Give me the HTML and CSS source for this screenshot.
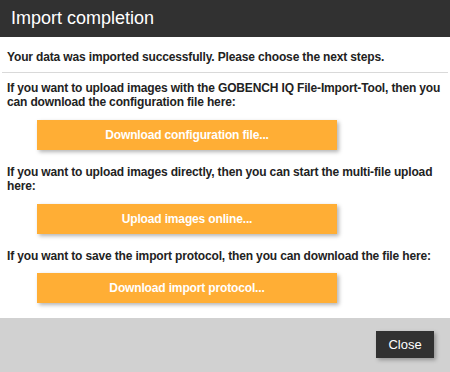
FILE: index.html
```html
<!DOCTYPE html>
<html>
<head>
<meta charset="utf-8">
<link rel="stylesheet" href="styles.css">
</head>
<body>
<div class="dialog">
  <div class="header">Import completion</div>
  <div class="body">
    <p class="intro">Your data was imported successfully. Please choose the next steps.</p>
    <div class="divider"></div>
    <div class="step">
      <p class="text">If you want to upload images with the GOBENCH IQ File-Import-Tool, then you can download the configuration file here:</p>
      <button class="btn">Download configuration file...</button>
    </div>
    <div class="step">
      <p class="text">If you want to upload images directly, then you can start the multi-file upload here:</p>
      <button class="btn">Upload images online...</button>
    </div>
    <div class="step">
      <p class="text">If you want to save the import protocol, then you can download the file here:</p>
      <button class="btn btn-last">Download import protocol...</button>
    </div>
  </div>
  <div class="footer">
    <button class="close">Close</button>
  </div>
</div>
</body>
</html>
```
FILE: styles.css
```css
html, body {
  margin: 0;
  padding: 0;
  background: #ffffff;
}
.dialog {
  width: 450px;
  height: 372px;
  display: flex;
  flex-direction: column;
  font-family: "Liberation Sans", Arial, sans-serif;
  color: #222;
}
.header {
  height: 37px;
  background: #313131;
  color: #ffffff;
  font-size: 18px;
  line-height: 37px;
  padding-left: 11px;
  flex: none;
}
.body {
  flex: 1;
  padding: 0 2px;
}
.intro {
  margin: 13px 0 0 5px;
  font-size: 12px;
  font-weight: bold;
  line-height: 14px;
  letter-spacing: -0.15px;
}
.divider {
  height: 1px;
  background: #d9d9d9;
  margin: 8px 0 0;
}
.step {
  display: flex;
  flex-direction: column;
  align-items: flex-start;
}
.text {
  margin: 8px 0 0 5px;
  font-size: 12px;
  font-weight: bold;
  line-height: 14px;
  letter-spacing: -0.15px;
}
.btn {
  margin: 11px 0 0 35px;
  width: 300px;
  height: 30px;
  border: none;
  background: #ffae35;
  color: #ffffff;
  font-family: "Liberation Sans", Arial, sans-serif;
  font-size: 12px;
  font-weight: bold;
  letter-spacing: -0.15px;
  box-shadow: 2px 2px 4px rgba(0, 0, 0, 0.3);
  padding: 0;
}
.btn-last {
  margin-top: 10px;
}
.step + .step .text {
  margin-top: 15px;
}
.footer {
  height: 54px;
  flex: none;
  background: #d1d1d1;
  display: flex;
  justify-content: flex-end;
  align-items: flex-start;
  padding: 13px 16px 0 0;
  box-sizing: border-box;
}
.close {
  width: 58px;
  height: 27px;
  border: none;
  background: #313131;
  color: #ffffff;
  font-family: "Liberation Sans", Arial, sans-serif;
  font-size: 13px;
  box-shadow: 2px 2px 4px rgba(0, 0, 0, 0.3);
  padding: 0;
}
```
